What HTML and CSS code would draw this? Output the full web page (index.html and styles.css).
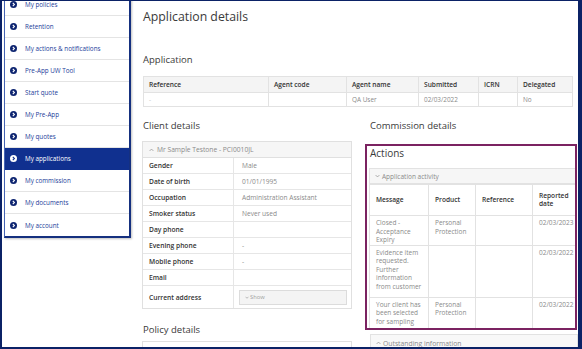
FILE: index.html
```html
<!DOCTYPE html>
<html>
<head>
<meta charset="utf-8">
<link rel="stylesheet" href="styles.css">
</head>
<body>
<div class="frame">
  <nav class="sidebar">
    <div class="nav-item"><svg class="ic" viewBox="0 0 8 8"><circle cx="4" cy="4" r="4"/><path d="M3.2 2.2 L5 4 L3.2 5.8"/></svg><span>My policies</span></div>
    <div class="nav-item"><svg class="ic" viewBox="0 0 8 8"><circle cx="4" cy="4" r="4"/><path d="M3.2 2.2 L5 4 L3.2 5.8"/></svg><span>Retention</span></div>
    <div class="nav-item"><svg class="ic" viewBox="0 0 8 8"><circle cx="4" cy="4" r="4"/><path d="M3.2 2.2 L5 4 L3.2 5.8"/></svg><span>My actions &amp; notifications</span></div>
    <div class="nav-item"><svg class="ic" viewBox="0 0 8 8"><circle cx="4" cy="4" r="4"/><path d="M3.2 2.2 L5 4 L3.2 5.8"/></svg><span>Pre-App UW Tool</span></div>
    <div class="nav-item"><svg class="ic" viewBox="0 0 8 8"><circle cx="4" cy="4" r="4"/><path d="M3.2 2.2 L5 4 L3.2 5.8"/></svg><span>Start quote</span></div>
    <div class="nav-item"><svg class="ic" viewBox="0 0 8 8"><circle cx="4" cy="4" r="4"/><path d="M3.2 2.2 L5 4 L3.2 5.8"/></svg><span>My Pre-App</span></div>
    <div class="nav-item"><svg class="ic" viewBox="0 0 8 8"><circle cx="4" cy="4" r="4"/><path d="M3.2 2.2 L5 4 L3.2 5.8"/></svg><span>My quotes</span></div>
    <div class="nav-item active"><svg class="ic" viewBox="0 0 8 8"><circle cx="4" cy="4" r="4"/><path d="M3.2 2.2 L5 4 L3.2 5.8"/></svg><span>My applications</span></div>
    <div class="nav-item"><svg class="ic" viewBox="0 0 8 8"><circle cx="4" cy="4" r="4"/><path d="M3.2 2.2 L5 4 L3.2 5.8"/></svg><span>My commission</span></div>
    <div class="nav-item"><svg class="ic" viewBox="0 0 8 8"><circle cx="4" cy="4" r="4"/><path d="M3.2 2.2 L5 4 L3.2 5.8"/></svg><span>My documents</span></div>
    <div class="nav-item"><svg class="ic" viewBox="0 0 8 8"><circle cx="4" cy="4" r="4"/><path d="M3.2 2.2 L5 4 L3.2 5.8"/></svg><span>My account</span></div>
  </nav>

  <main class="main">
    <h1 class="page-title">Application details</h1>
    <h2 class="section-title app-title">Application</h2>
    <table class="app-table">
      <colgroup><col class="c1"><col class="c2"><col class="c3"><col class="c4"><col class="c5"><col class="c6"></colgroup>
      <tr><th>Reference</th><th>Agent code</th><th>Agent name</th><th>Submitted</th><th>ICRN</th><th>Delegated</th></tr>
      <tr><td class="faint">-</td><td></td><td>QA User</td><td>02/03/2022</td><td></td><td>No</td></tr>
    </table>

    <div class="cols">
      <div class="col-left">
        <h2 class="section-title">Client details</h2>
        <div class="panel">
          <div class="panel-head"><svg class="chev" viewBox="0 0 8 5"><path d="M1 4 L4 1 L7 4"/></svg>Mr Sample Testone - PCI0010JL</div>
          <div class="row"><div class="lbl">Gender</div><div class="val">Male</div></div>
          <div class="row"><div class="lbl">Date of birth</div><div class="val">01/01/1995</div></div>
          <div class="row"><div class="lbl">Occupation</div><div class="val">Administration Assistant</div></div>
          <div class="row"><div class="lbl">Smoker status</div><div class="val">Never used</div></div>
          <div class="row"><div class="lbl">Day phone</div><div class="val"></div></div>
          <div class="row"><div class="lbl">Evening phone</div><div class="val">-</div></div>
          <div class="row"><div class="lbl">Mobile phone</div><div class="val">-</div></div>
          <div class="row"><div class="lbl">Email</div><div class="val"></div></div>
          <div class="row row-tall"><div class="lbl">Current address</div><div class="val"><div class="showbox"><svg class="chev" viewBox="0 0 8 5"><path d="M1 1 L4 4 L7 1"/></svg>Show</div></div></div>
        </div>
        <h2 class="section-title policy-title">Policy details</h2>
        <div class="policybox"></div>
      </div>

      <div class="col-right">
        <h2 class="section-title comm-title">Commission details</h2>
        <div class="actions">
          <h3 class="actions-title">Actions</h3>
          <div class="bar"><svg class="chev" viewBox="0 0 8 5"><path d="M1 1 L4 4 L7 1"/></svg>Application activity</div>
          <table class="act-table">
            <colgroup><col class="a1"><col class="a2"><col class="a3"><col class="a4"></colgroup>
            <tr class="hr"><th>Message</th><th>Product</th><th>Reference</th><th>Reported<br>date</th></tr>
            <tr class="r1"><td>Closed -<br>Acceptance<br>Expiry</td><td>Personal<br>Protection</td><td></td><td>02/03/2023</td></tr>
            <tr class="r2"><td>Evidence item<br>requested.<br>Further<br>information<br>from customer</td><td></td><td></td><td>02/03/2022</td></tr>
            <tr class="r3"><td>Your client has<br>been selected<br>for sampling</td><td>Personal<br>Protection</td><td></td><td>02/03/2022</td></tr>
          </table>
        </div>
        <div class="bar outstanding"><svg class="chev" viewBox="0 0 8 5"><path d="M1 4 L4 1 L7 4"/></svg>Outstanding information</div>
      </div>
    </div>
  </main>
</div>
</body>
</html>
```

FILE: styles.css
```css
* { box-sizing: border-box; }
html, body { margin: 0; padding: 0; }
body {
  width: 582px;
  height: 349px;
  overflow: hidden;
  background: #fff;
  font-family: "Open Sans", "Noto Sans", sans-serif;
  color: #333;
}
.frame {
  width: 582px;
  height: 349px;
  display: flex;
  align-items: flex-start;
  overflow: hidden;
  border-top: 1px solid #0b2266;
  border-left: 2px solid #0b2266;
  border-bottom: 2px solid #0b2266;
  border-right: 4px solid #0b2266;
}

/* sidebar */
.sidebar {
  flex: none;
  width: 127px;
  margin-left: 2px;
  margin-top: -7px;
  border-left: 1px solid #4463b5;
  border-right: 2px solid #15307f;
  border-bottom: 2px solid #15307f;
  box-shadow: 1px 1px 2px rgba(0, 0, 0, 0.25);
  background: #fff;
}
.nav-item {
  height: 22px;
  display: flex;
  align-items: center;
  gap: 8px;
  padding-left: 5px;
  border-bottom: 1px solid #e4e4e4;
  font-size: 6.3px;
  color: #23409a;
  white-space: nowrap;
}
.nav-item:last-child { border-bottom: none; }
.ic { width: 7px; height: 7px; flex: none; }
.ic circle { fill: #0d2470; }
.ic path { fill: none; stroke: #fff; stroke-width: 1.3; }
.nav-item.active { background: #10308f; color: #fff; border-bottom-color: #10308f; }
.nav-item.active .ic circle { fill: #fff; }
.nav-item.active .ic path { stroke: #10308f; }

/* main */
.main {
  flex: 1;
  min-width: 0;
  padding: 8px 0 0 12px;
}
.page-title {
  margin: 0;
  font-size: 12.3px;
  line-height: 16px;
  font-weight: 400;
  color: #3a3a3a;
}
.section-title {
  margin: 0;
  font-size: 9.5px;
  line-height: 12px;
  font-weight: 400;
  color: #3a3a3a;
}
.app-title { margin-top: 29px; }

.app-table {
  margin-top: 10px;
  width: 429px;
  border-collapse: collapse;
  table-layout: fixed;
}
.c1 { width: 125px; } .c2 { width: 78px; } .c3 { width: 72px; }
.c4 { width: 60px; } .c5 { width: 39px; } .c6 { width: 55px; }
.app-table th, .app-table td {
  border: 1px solid #e2e2e2;
  text-align: left;
  padding: 0 5px;
  white-space: nowrap;
}
.app-table th {
  height: 16px;
  background: #f4f4f4;
  font-size: 6.6px;
  font-weight: 600;
  color: #333;
}
.app-table td {
  height: 14px;
  font-size: 6.4px;
  color: #8a8a8a;
}
.app-table td.faint { color: #c8c8c8; }

.cols {
  display: flex;
  gap: 13px;
  margin-top: 13px;
  margin-left: -1px;
}
.col-left { width: 210px; flex: none; }
.col-left > .section-title { margin-left: 1px; }
.col-right { flex: 1; min-width: 0; }

.panel {
  margin-top: 9px;
  border: 1px solid #e0e0e0;
}
.panel-head {
  height: 16px;
  display: flex;
  align-items: center;
  gap: 3px;
  padding-left: 6px;
  background: #f6f6f6;
  border-bottom: 1px solid #e0e0e0;
  font-size: 6.7px;
  color: #8a8a8a;
}
.chev { width: 5px; height: 4px; flex: none; }
.chev path { fill: none; stroke: #8a8a8a; stroke-width: 1.1; }
.row {
  display: grid;
  grid-template-columns: 90px 1fr;
  height: 16px;
  border-bottom: 1px solid #e6e6e6;
}
.row:last-child { border-bottom: none; }
.row-tall { height: 22px; }
.lbl {
  display: flex;
  align-items: center;
  padding-left: 6px;
  font-size: 6.7px;
  font-weight: 600;
  color: #333;
}
.val {
  display: flex;
  align-items: center;
  padding-left: 8px;
  border-left: 1px solid #e6e6e6;
  font-size: 6.6px;
  color: #8a8a8a;
}
.showbox {
  width: 108px;
  height: 15px;
  margin-left: -3px;
  display: flex;
  align-items: center;
  gap: 1px;
  padding-left: 5px;
  background: #f4f4f4;
  border: 1px solid #dcdcdc;
  font-size: 5.8px;
  color: #a0a0a0;
}
.showbox .chev { width: 4px; height: 3px; }
.policy-title { margin-top: 15px; }
.policybox {
  margin-top: 5px;
  height: 20px;
  border: 1px solid #e0e0e0;
}

/* right column */
.comm-title { margin-left: 5px; }
.actions {
  margin-top: 12px;
  height: 186px;
  width: 212px;
  border: 2px solid #7b2361;
  padding-left: 2px;
  overflow: hidden;
}
.actions-title {
  margin: 1px 0 0 1px;
  font-size: 10px;
  line-height: 13px;
  font-weight: 400;
  color: #3a3a3a;
}
.bar {
  height: 16px;
  width: 240px;
  margin-top: 8px;
  display: flex;
  align-items: center;
  gap: 2px;
  padding-left: 5px;
  background: #f6f6f6;
  border: 1px solid #e2e2e2;
  font-size: 6.5px;
  color: #8a8a8a;
}
.act-table {
  width: 240px;
  border-collapse: collapse;
  table-layout: fixed;
}
.a1 { width: 59px; } .a2 { width: 47px; } .a3 { width: 57px; } .a4 { width: 77px; }
.act-table th, .act-table td {
  border: 1px solid #e2e2e2;
  text-align: left;
  padding: 0 0 0 6px;
  white-space: nowrap;
}
.act-table th {
  font-size: 6.6px;
  line-height: 8.5px;
  font-weight: 600;
  color: #333;
  vertical-align: middle;
}
.act-table td {
  font-size: 6.5px;
  line-height: 8.5px;
  color: #8a8a8a;
  vertical-align: top;
  padding-top: 3px;
}
.act-table .hr { height: 31px; }
.act-table .r1 { height: 28px; }
.act-table .r2 { height: 52px; }
.act-table .r3 { height: 32px; }
.outstanding {
  margin-top: 4px;
  margin-left: 5px;
  width: auto;
  height: 18px;
  background: #f8f8f8;
  font-size: 6.8px;
}
```
